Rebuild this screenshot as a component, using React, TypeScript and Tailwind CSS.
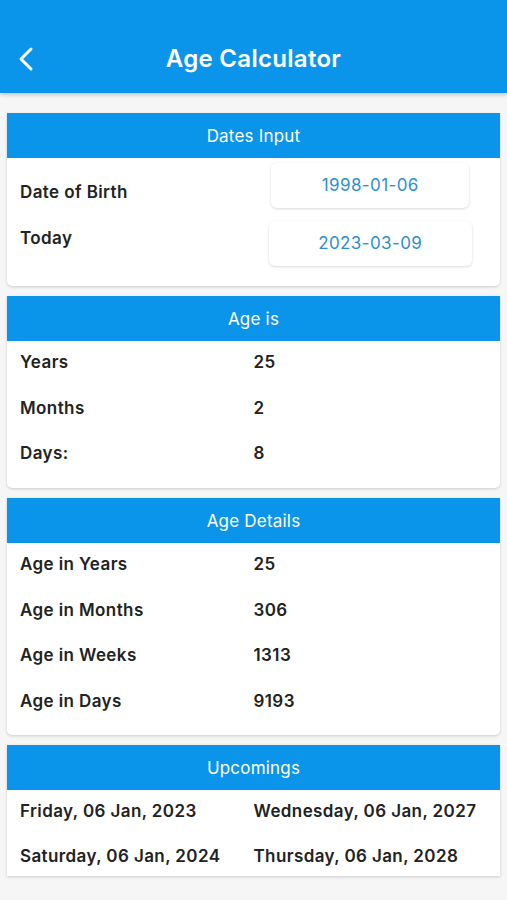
import React from 'react';

const font = { fontFamily: 'Inter, "Noto Sans", sans-serif' };

function Card({ title, children, className = '' }: { title: string; children: React.ReactNode; className?: string }) {
  return (
    <div className={`bg-white rounded-b-[5px] shadow-[0_1px_3px_rgba(0,0,0,0.18)] overflow-hidden ${className}`}>
      <div className="h-[45px] pt-[2px] bg-[#0b95ea] flex items-center justify-center text-white text-[17px] tracking-[0.2px]">{title}</div>
      {children}
    </div>
  );
}

function Rows({ rows, pb, gap }: { rows: [string, string][]; pb: string; gap: string }) {
  return (
    <div className={`pt-[9px] px-[13px] flex flex-col ${gap} ${pb}`}>
      {rows.map(([a, b]) => (
        <div key={a + b} className="grid grid-cols-2 leading-[24px] text-[17px] tracking-[0.4px] font-semibold text-[#222]">
          <span>{a}</span>
          <span>{b}</span>
        </div>
      ))}
    </div>
  );
}

export default function App() {
  return (
    <div className="w-[507px] h-[900px] bg-[#f6f6f6] overflow-hidden" style={font}>
      {/* App bar */}
      <div className="h-[93px] bg-[#0b95ea] shadow-[0_2px_4px_rgba(0,0,0,0.2)] relative flex items-end pb-[19px]">
        <svg className="absolute left-[16px] top-[46px]" width="22" height="26" viewBox="0 0 22 26" fill="none">
          <path d="M15 3 L5 13 L15 23" stroke="white" strokeWidth="3" strokeLinecap="round" strokeLinejoin="round" />
        </svg>
        <div className="w-full text-center text-white text-[24px] tracking-[0.3px] font-semibold leading-[30px]">Age Calculator</div>
      </div>

      <div className="px-[7px] pt-[20px] flex flex-col gap-[10px]">
        <Card title="Dates Input">
          <div className="grid grid-cols-2 px-[13px] pt-[5px] pb-[20px] text-[17px] tracking-[0.4px]">
            <div className="flex flex-col font-semibold text-[#222] leading-[24px]">
              <span className="mt-[17px]">Date of Birth</span>
              <span className="mt-[22px]">Today</span>
            </div>
            <div className="flex flex-col items-center gap-[13px]">
              <div className="h-[45px] w-[198px] rounded-[6px] bg-white shadow-[0_1px_3px_rgba(0,0,0,0.15)] flex items-center justify-center text-[#2a8fd4]">
                1998-01-06
              </div>
              <div className="h-[45px] w-[203px] rounded-[6px] bg-white shadow-[0_1px_3px_rgba(0,0,0,0.15)] flex items-center justify-center text-[#2a8fd4]">
                2023-03-09
              </div>
            </div>
          </div>
        </Card>

        <Card title="Age is">
          <Rows gap="gap-[21.5px]" pb="pb-[23px]" rows={[['Years', '25'], ['Months', '2'], ['Days:', '8']]} />
        </Card>

        <Card title="Age Details">
          <Rows
            gap="gap-[21.7px]"
            pb="pb-[22px]"
            rows={[
              ['Age in Years', '25'],
              ['Age in Months', '306'],
              ['Age in Weeks', '1313'],
              ['Age in Days', '9193'],
            ]}
          />
        </Card>

        <Card title="Upcomings" className="rounded-b-none">
          <Rows
            gap="gap-[21px]"
            pb="pb-[8px]"
            rows={[
              ['Friday, 06 Jan, 2023', 'Wednesday, 06 Jan, 2027'],
              ['Saturday, 06 Jan, 2024', 'Thursday, 06 Jan, 2028'],
            ]}
          />
        </Card>
      </div>
    </div>
  );
}
